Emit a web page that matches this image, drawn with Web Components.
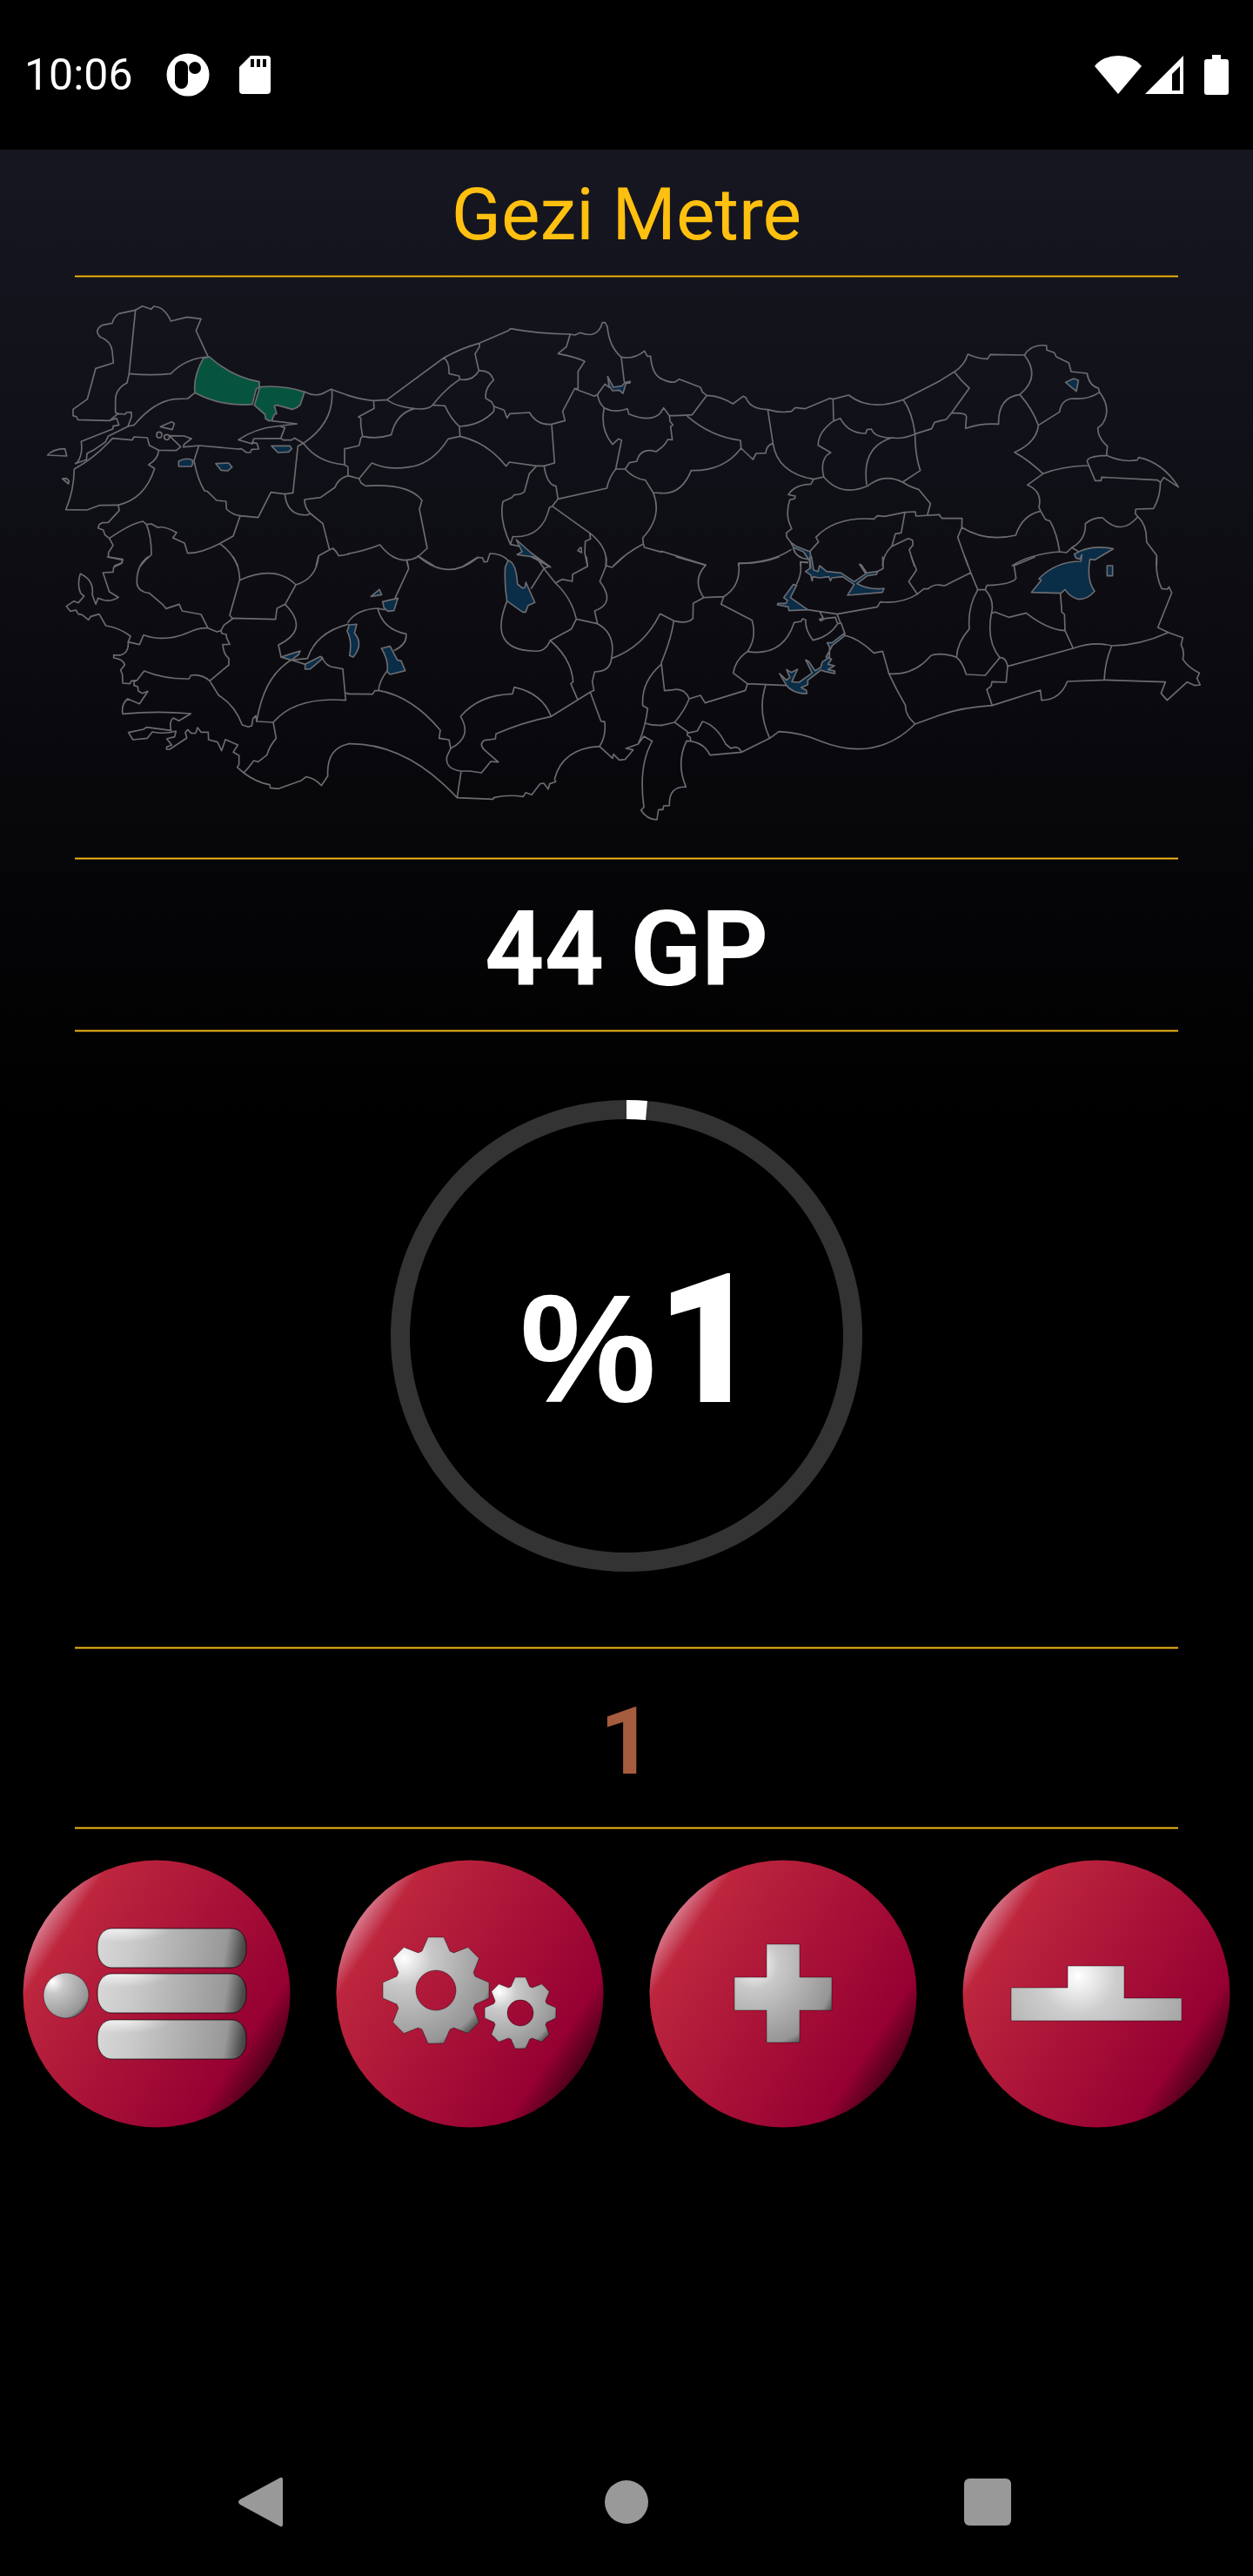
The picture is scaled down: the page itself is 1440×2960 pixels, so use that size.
<!DOCTYPE html>
<html lang="tr">
<head>
<meta charset="utf-8">
<meta name="viewport" content="width=device-width, initial-scale=1">
<title>Gezi Metre</title>
<style>
body{margin:0;background:#000;font-family:Roboto,sans-serif;color:#fff}
</style>
</head>
<body>
<gezi-app></gezi-app>
<script>
const define = (name, html) => {
  const tpl = document.createElement('template');
  tpl.innerHTML = html;
  customElements.define(name, class extends HTMLElement {
    constructor() {
      super();
      this.attachShadow({mode: 'open'}).append(tpl.content.cloneNode(true));
    }
  });
};

// Eight-toothed gear outline with a round hole; s scales the 61-unit radius.
const gear = (cx, cy, s, hole) => {
  const pts = [];
  for (let i = 0; i < 8; i++) {
    const a = i * Math.PI / 4, c = Math.cos(a), n = Math.sin(a);
    for (const [x, y] of [[-16, -45], [-9, -61], [9, -61], [16, -45]])
      pts.push((cx + s * (x * c - y * n)).toFixed(1) + ' ' + (cy + s * (x * n + y * c)).toFixed(1));
  }
  return `M${pts.join('L')}ZM${cx - hole} ${cy}a${hole} ${hole} 0 1 0 ${hole * 2} 0a${hole} ${hole} 0 1 0 ${-hole * 2} 0Z`;
};

define('status-bar', `
<style>
:host{display:flex;align-items:center;justify-content:space-between;height:172px;padding:0 28px;box-sizing:border-box;background:#000}
.left,.right{display:flex;align-items:center}
.left{gap:34px}
.right{gap:4px}
time{font-size:50px;line-height:60px;margin-right:4px}
svg{display:block;fill:#fff}
.bat{margin-left:20px}
</style>
<div class="left">
<time>10:06</time>
<svg width="50" height="50" viewBox="0 0 50 50"><circle cx="25" cy="25" r="24.500"/><rect x="10" y="9" width="15" height="32" rx="7.500" fill="#000"/><circle cx="33" cy="17" r="7" fill="#000"/></svg>
<svg width="36" height="46" viewBox="0 0 36 46"><path fill-rule="evenodd" d="M13 1H32a4 4 0 0 1 4 4V41a4 4 0 0 1-4 4H4a4 4 0 0 1-4-4V14ZM13 5V14H17V5ZM20 5V14H24V5ZM27 5V14H31V5Z"/></svg>
</div>
<div class="right">
<svg width="54" height="46" viewBox="0 0 54 46"><path d="M0 13Q10 1 27 1T54 13L27 45Z"/></svg>
<svg width="44" height="46" viewBox="0 0 44 46"><path fill-rule="evenodd" d="M44 1V45H0ZM40 13L31 22V41H40Z"/></svg>
<svg class="bat" width="28" height="46" viewBox="0 0 28 46"><path d="M9 0H19V5H25a3 3 0 0 1 3 3V43a3 3 0 0 1-3 3H3a3 3 0 0 1-3-3V8a3 3 0 0 1 3-3H9Z"/></svg>
</div>`);

define('gold-rule', `
<style>
:host{display:block;height:3px;margin:0 6%;background:linear-gradient(#7a5507 0 1px,#f0c020 1px 2px,#7a5507 2px)}
</style>`);

define('turkey-map', `
<style>
:host{display:block}
svg{display:block;width:100%;height:auto;fill:none;stroke:#6b6b70;stroke-width:5;stroke-linejoin:round;stroke-linecap:round}
.v{fill:#07543e}
.w{fill:#0a2d48}
</style>
<svg viewBox="0 319 1440 666" role="img" aria-label="Türkiye">
<g transform="translate(40 330) scale(.33333)">
<path d="M347 79L290 91Q272 103 267 124L232 131Q212 143 216 158L224 171Q262 184 267 220L271 261L210 280L181 386L132 421V443L144 447L149 457L258 460L282 452L290 475L270 479V488L160 532Q166 575 148 602L140 608L178 595L180 573L205 560L243 534L253 514L321 480L333 448V431L315 432L312 438L286 436L258 460"/>
<path d="M347 79L325 298L318 330Q278 350 278 390V432L286 436M347 79L371 65L401 76L410 66Q448 68 469 117L525 103L573 109L556 150L597 239M325 298Q400 306 469 298Q520 245 597 240M321 480L343 475Q410 395 480 386L527 384L552 364"/>
<path class="v" d="M581 245L602 240Q680 310 774 326V344L763 352L750 404Q640 412 552 364Q545 310 581 245Z"/>
<path class="v" d="M776 344Q850 336 930 361L915 406Q903 418 888 421L834 406L826 410L834 436L826 438L818 459L808 461L796 454L793 438L757 407Z"/>
<path d="M930 361Q970 382 1005 360L1021 352L1080 373M1024 352Q1035 465 926 538M818 461L904 471L830 480Q760 487 702 526L750 540L755 522L848 521L862 485L850 481M848 521L856 527H885L895 520L926 538"/>
<path d="M433 481L472 464L481 470L474 491ZM420 509a9 10 0 1 0 18 0a9 10 0 1 0-18 0M446 517a9 9 0 1 0 18 0a9 9 0 1 0-18 0M464 512L515 513L540 522L515 541L512 551L568 546L700 558L712 557L730 570H743L748 559L772 558L766 538L748 536M464 512L503 550L488 563L427 562L395 545L388 519L342 516L336 527L268 521Q205 590 136 627Q135 700 107 767L180 768L222 752L288 751"/>
<path d="M427 562Q425 593 392 612L413 625Q380 730 288 751L291 770L253 811L232 812L222 818L218 830L236 837L242 854L257 866L270 890L254 915V930L303 938L300 950L275 960M44 579Q62 558 104 557L110 582ZM95 660L109 659L118 668L116 678Z"/>
<path class="w" d="M496 600Q520 586 543 596L545 608L540 618H496ZM624 608L668 606L680 620L666 633L642 631ZM816 547H880L886 557L875 568L838 570Z"/>
<path d="M565 548L549 598Q560 660 585 702L595 704L627 735L659 738L661 765Q680 784 708 788L770 794L814 707L862 713L890 709L907 548L926 538Q975 605 1068 612L1080 620M1068 612V557L1080 555M708 788L684 858L637 884Q570 918 527 917L516 882L476 864L489 846Q440 820 425 829L402 816L385 818L373 807Q330 815 257 866M385 818Q402 860 402 922Q380 940 365 960M637 884Q675 908 700 960M862 713Q870 790 940 785L950 780L993 815L1016 905L978 926L970 960M1080 650Q1045 660 1035 690L985 725L930 732Q930 760 950 780M1016 905L1028 900Q1040 910 1048 926L1080 921"/>
</g>
<g transform="translate(400 330) scale(.33333)">
<path d="M0 373Q50 388 88 391L134 388L331 243Q390 210 453 193L554 149L560 143Q650 160 766 162L782 165L800 157Q860 180 877 122H886L894 136Q900 205 942 241Q985 250 1022 220L1032 238H1043Q1048 300 1080 316M88 391L90 418L36 447L44 452V475L50 514L44 520L38 546L0 555M50 514Q100 525 149 509Q165 435 230 418M134 388Q170 415 250 420Q280 420 292 406L334 409Q355 455 384 480L386 514L345 523Q290 610 210 620Q140 632 82 606L38 660L0 650V625M292 406Q335 350 385 318L383 306L348 298Q350 260 331 243M385 318Q430 325 451 288L438 230L453 205V193M451 288Q490 285 502 320Q470 350 475 383L495 395L503 411V427Q460 475 384 480"/>
<path d="M503 411L538 424L548 451L558 436L626 432Q650 475 700 473L748 460L740 428L781 350H793V290L816 256Q795 243 724 229L753 205L766 162M781 350L850 376L860 370L886 334L900 345M942 241L952 325M860 370Q865 400 883 416Q920 435 963 419L968 437Q1050 470 1080 430M883 416Q868 490 912 542L932 523L943 527L923 627H955L970 605L996 600Q1005 560 1045 563L1062 567L1080 553M386 514Q480 535 545 617L556 603L650 616H676L712 606L702 473M650 616L625 643L608 705Q600 715 572 716L565 725L534 739Q520 800 560 887L568 860Q670 865 694 760L704 755L724 730L717 686Q685 680 676 616M724 730L892 693Q900 655 923 627M955 627Q985 660 1025 665L1052 708L1080 710M1052 708Q1085 790 1016 864L1018 885Q960 915 915 960M1018 885L1022 897L1080 913M704 755L833 847Q900 900 888 960M833 847L836 868L818 876L816 915L825 960M800 898L792 908L805 915L804 898ZM560 887L590 893"/>
<path class="w" d="M895 308L915 345L945 340L955 328L973 325L972 330L958 332L948 366L935 355L912 357L900 340ZM580 870L630 915L698 965L640 930L583 922L600 912Z"/>
<path d="M38 660L45 675L60 685Q210 675 255 735L246 765L273 900L240 930Q170 965 110 888Q60 908 0 919M203 943L206 960M240 926L295 960M400 960L446 931L464 933L469 947L480 946L489 918Q530 918 552 942"/>
</g>
<g transform="translate(760 330) scale(.33333)">
<path d="M0 316Q30 330 47 327L62 317L135 345L142 362L157 373Q205 375 247 402L282 376L292 381Q305 420 367 422Q410 435 449 428L462 415L495 419L581 383L592 386L646 372Q720 430 834 388L960 323M157 373L106 440Q60 443 28 443L8 416L0 428M28 443L30 462L40 475L32 480L38 526L22 525Q12 545 0 553M90 445Q170 515 273 528L275 555Q215 635 103 632Q70 715 0 710M275 555L316 594L327 573L360 572Q362 545 385 538M367 422L385 538Q400 640 525 662L560 654M592 386L594 461L617 452Q645 505 705 504L709 491L724 489Q735 520 795 519Q830 525 875 506L932 488L942 466L960 461M594 461Q540 500 541 545L584 570Q545 590 560 654Q620 725 712 685Q770 640 832 672M795 519Q690 550 708 680M834 388Q865 430 875 506Q875 580 893 632L832 672Q860 690 887 697L928 746L918 783"/>
<path d="M525 662L516 679Q460 680 438 715L462 720L460 729L443 733Q425 790 450 832L431 847L433 862L447 880M447 905Q380 950 266 952V960M0 910L153 958M513 910L542 878L533 862Q600 790 733 799L745 788L770 790L840 776L876 774L878 789L960 784M840 776L827 847L807 850L795 893Q765 920 763 960M795 893L852 866L866 872L868 888L855 905L872 960M480 960V947L505 950"/>
<path class="w" d="M447 880L465 893L513 912L524 975H512V945L490 912L455 897Z"/>
<path d="M455 900Q465 935 508 938"/>
</g>
<g transform="translate(1080 330) scale(.33333)">
<path d="M0 323L50 292Q85 270 97 231Q135 248 165 247L174 232L292 234Q315 195 368 201L369 217L395 226L402 240L445 261L453 291L508 297Q515 340 547 348L551 362Q595 420 560 473L545 485Q545 520 578 548L575 580Q630 605 681 596L686 587Q770 605 823 689L772 656L761 673L751 665L558 655L556 667H536L508 600Q510 582 575 580M50 292Q75 325 102 348L40 434L22 456L0 461M40 434Q90 432 92 445L89 487Q140 468 203 472Q200 380 276 370Q350 310 292 234M276 370Q320 420 340 476Q335 535 258 569Q310 598 356 643Q420 617 512 615M340 476L413 430Q420 385 460 384Q515 388 551 362M356 643L302 682Q355 705 342 758L348 772L364 800L380 806Q405 850 413 912M761 673Q760 725 737 763L676 765L674 780L683 791Q715 820 713 878L748 925V960M683 791Q625 860 562 795Q530 792 502 815Q505 870 455 898L437 915L413 912Q310 920 250 960M0 788L8 797H77L76 828L62 862L97 960M76 828Q160 880 262 855Q285 785 348 772M455 898L480 912"/>
<path class="w" d="M434 328L462 315L478 321L471 359ZM464 920Q520 885 598 902L535 940L518 938Q505 1010 534 1048Q510 1076 480 1076Q450 1070 432 1042L418 1055L316 1052L350 1010L342 1005Q400 945 487 945L490 922L484 937L470 934Z"/>
</g>
<g transform="translate(40 640) scale(.33333)">
<path d="M250 0L303 10L300 22L272 35L270 52L235 54L257 120L288 139Q255 160 218 142L210 163L198 130Q205 80 157 58Q145 95 158 125L170 135L150 158L135 152L109 170L122 187L142 183L150 197L163 199L185 217L193 205L222 197L245 237Q290 243 330 273L322 293L361 302L375 269Q450 295 530 260Q565 243 597 245L573 198L508 186L498 163L452 178L440 163L395 125Q355 120 352 90Q350 30 390 0M597 245L628 258L642 254L652 235L682 213L672 200L706 80Q708 40 684 0M706 80Q830 25 900 96Q970 75 978 0M900 96L863 163L835 177L830 215L682 211M863 163Q950 250 840 303L849 345L885 355L940 350Q970 260 1080 232M885 355Q790 410 765 567L822 570Q900 480 1072 494L1062 386L1020 378Q1000 370 990 345M885 355L932 370"/>
<path class="w" d="M849 345L880 335L915 324L910 336L885 355ZM932 370L985 343L992 350L950 386L932 387Z"/>
<path d="M642 254L645 264L660 267L662 280L672 301L648 302Q650 335 669 350V372L603 427Q575 402 538 408L532 420Q450 422 377 393L352 425L332 428L328 437L303 435L302 405L296 390L310 372Q305 352 272 348V338Q325 345 322 293M352 425L342 430V443L355 447L357 462L370 470L390 463L361 506L320 489Q297 508 303 541Q420 530 538 540L497 565L477 555Q462 570 470 598L385 587L375 594L323 605L338 630L388 625L405 603Q450 612 487 600L482 620L455 627L472 648L455 655L454 663H465L524 624L519 605L527 595L540 608L555 607L561 588L573 604H598L599 630L630 638L644 668L657 629L700 648L684 673L704 684V715L698 725L720 744M603 427L634 477Q690 510 715 579L736 586L748 582L752 557L762 547L765 567M822 570L832 625Q810 650 800 683L770 706L755 702L735 728L720 744Q765 778 810 785L812 796L840 799L920 770L935 758Q965 762 988 788L1010 755Q1005 660 1080 645M1072 470H1080"/>
</g>
<g transform="translate(400 640) scale(.33333)">
<path d="M203 12L209 40L163 140M245 0Q345 85 446 3M102 177L125 182M0 225Q30 180 102 177Q120 250 200 265Q205 300 160 322M137 390Q108 425 105 460Q220 480 318 597L314 625L348 630L354 660M0 472L85 473L92 461L105 460M548 152Q480 320 640 324Q680 330 697 288L770 248L787 214Q770 140 715 90L675 40L632 108M675 40L695 32L632 0M675 38L655 10M715 90L738 77L773 84L774 60L826 32L822 0M787 214L860 230L850 186Q925 160 868 84L890 30V0M890 30L910 36L950 0"/>
<path class="w" d="M79 136L108 112L116 130ZM119 154L172 142L158 185L137 187L124 175ZM542 35L552 12Q580 20 584 93L602 108L610 105L613 87L644 157L621 167L612 190H602L548 152Q538 90 542 35ZM4 234L30 232L22 262Q55 300 18 345L5 340Q15 290 -3 256ZM115 315L145 308L170 355L183 358L197 392L145 405L135 395Q140 355 115 315Z"/>
<path d="M860 230Q925 265 908 350Q905 395 850 396L842 430L848 460L835 466L700 550Q600 570 510 610L508 627L470 632Q450 645 470 665L518 707L492 705L460 744L420 738H390Q330 730 342 685L354 660Q430 620 388 550Q450 475 567 472L573 449Q670 470 700 550M697 288Q770 350 776 430L768 437L791 490M908 350Q1020 310 1075 197H1080M835 466L872 566L885 568Q890 620 867 653Q740 660 712 765L716 775L695 782L690 800L675 780L662 782L633 820L613 812L604 826Q550 818 502 830L500 835L376 830Q200 640 0 644M376 830L390 738M867 653L912 694L915 680L935 700L955 698L983 665L958 660L1000 645Q1025 590 1033 522L1016 512Q1010 430 1080 370M1000 645L1020 618L1049 635Q1000 720 1020 862L1010 873Q1030 905 1065 906L1070 872L1080 870M1025 573Q1050 582 1080 580"/>
</g>
<g transform="translate(760 640) scale(.33333)">
<path d="M52 0L153 28Q105 80 146 140L215 137Q275 100 267 22Q340 25 405 0M0 198L43 220Q90 232 109 212L110 160L146 140M43 220Q35 280 0 365L11 461L40 458Q80 450 96 489L135 477L151 503L290 460L297 437L248 400Q255 355 297 326Q330 280 313 218L206 163L215 137M96 489Q80 530 46 570L0 581M46 570L90 602V615L100 622L101 634M90 607L124 600L142 567Q190 580 222 645L240 660Q265 648 277 673L168 683Q145 635 87 634Q50 710 85 793Q25 790 28 857L8 858L6 870L0 872M277 673L374 625L405 602Q480 605 550 635Q740 710 875 576L960 545M374 625Q330 530 360 442M297 437L430 443M297 326Q420 345 458 226L482 222L487 213L498 217Q495 250 523 287Q580 275 608 230L620 228L632 262M608 230L600 208L565 212L550 220L545 215L558 210L547 190M618 228L606 197L745 172L755 155Q830 162 883 128L905 110H920Q935 95 960 96M632 270Q680 280 733 331L763 325L785 403L812 458L842 512Q840 545 875 576M785 403Q870 408 925 345Q930 335 960 335M505 182L606 197M480 17L505 18M480 17Q485 60 467 92M763 0L765 40L742 52M862 0L880 45L853 85L883 128"/>
<path class="w" d="M408 402L432 425L443 415L432 388L448 398L470 387L450 430L475 432L520 400L498 355L508 360L530 392L550 380L555 362L580 345V310L572 296L590 295L632 262V272L590 305L568 345L587 352L575 370L597 375L575 388L598 393V402L565 395L550 390L505 425V440L482 450L500 460L502 471Q450 470 430 440ZM512 0H518L522 25L525 45L540 50L546 30L570 50L620 55L665 85L705 58L683 25L690 28L708 55L745 50L742 60L710 65L675 92Q720 115 768 108L762 122L642 132L665 95L625 68L588 72L583 82L578 68L545 72L523 68L520 82L515 62L497 50L515 38ZM455 95L467 97L445 140L505 182L440 185L438 172L400 165L402 160H430L435 150L422 140Z"/>
</g>
<g transform="translate(1080 640) scale(.33333)">
<path d="M87 0L107 54L17 99L0 97M107 54L131 113H157Q190 150 178 195Q160 290 207 347L157 408L91 405Q78 360 58 346Q60 295 102 248Q95 175 131 113M58 346Q30 335 0 335M157 113L162 98Q250 95 263 73L256 30L328 0M178 195L190 190L238 208L298 193Q370 250 432 254L430 198L421 190L416 125M432 254L460 315L234 377Q228 345 207 347M234 377L229 432L180 430L177 445L162 457L181 512Q80 518 0 545M181 512L347 459L351 494Q415 493 440 429L567 424L778 431L763 470L784 494L853 431L880 443L898 441L887 418L895 400Q855 380 838 352Q845 325 832 303L838 278L788 260Q690 305 593 306Q530 290 460 315M593 306Q570 360 567 424M788 260L752 243L800 123L790 103L785 111L765 109Q742 60 748 0"/>
<path class="w" d="M577 30H596V65H577Z"/>
</g>
</svg>`);

define('progress-ring', `
<style>
:host{display:grid;place-items:center;width:542px;aspect-ratio:1}
svg,.value{grid-area:1/1}
svg{display:block;width:100%}
.value{display:flex;align-items:baseline;font-family:"Liberation Sans",sans-serif;font-weight:700;font-size:176px;line-height:216px;padding:20px 0 0 32px}
::slotted(b){font-family:Roboto,sans-serif;font-size:208px;line-height:216px}
</style>
<svg viewBox="0 0 542 542" fill="none" stroke-width="22" aria-hidden="true"><circle cx="271" cy="271" r="260" stroke="#333"/><path d="M271 11A260 260 0 0 1 294 12" stroke="#fff"/></svg>
<div class="value"><slot></slot></div>`);

define('round-button', `
<style>
:host{display:grid;place-items:center;flex:1}
button{appearance:none;display:block;width:308px;height:308px;padding:0;border:0;border-radius:50%;background:none}
::slotted(svg){display:block;width:100%;height:100%}
</style>
<button type="button"><slot></slot></button>`);

define('system-nav', `
<style>
:host{display:flex;justify-content:space-between;align-items:center;padding:0 264px 44px}
button{appearance:none;display:block;padding:0;border:0;background:none}
svg{display:block;fill:#999}
</style>
<button type="button" aria-label="Geri"><svg width="82" height="82" viewBox="0 0 82 82"><path d="M58 13Q61 12 61 15V67Q61 70 58 69L12 44Q8 41 12 38Z"/></svg></button>
<button type="button" aria-label="Ana ekran"><svg width="82" height="82" viewBox="0 0 82 82"><circle cx="41" cy="41" r="25"/></svg></button>
<button type="button" aria-label="Son uygulamalar"><svg width="82" height="82" viewBox="0 0 82 82"><rect x="14" y="14" width="54" height="54" rx="6"/></svg></button>`);

const disc = id => `
<linearGradient id="d${id}" gradientUnits="userSpaceOnUse" x1="25" y1="70" x2="283" y2="238">
<stop offset="0" stop-color="#d7788b"/><stop offset=".09" stop-color="#bd263d"/><stop offset=".88" stop-color="#960032"/><stop offset="1" stop-color="#4c0019"/></linearGradient>
<linearGradient id="b${id}" x1="0" y1="0" x2="1" y2=".04">
<stop offset="0" stop-color="#d8d8d8"/><stop offset=".25" stop-color="#cacaca"/><stop offset=".88" stop-color="#989898"/><stop offset="1" stop-color="#484848"/></linearGradient>
<radialGradient id="h${id}" cx=".15" cy="0" r=".35"><stop offset="0" stop-color="#fff" stop-opacity=".7"/><stop offset="1" stop-color="#fff" stop-opacity="0"/></radialGradient>
<radialGradient id="g${id}" cx=".2" cy=".2" r=".95"><stop offset="0" stop-color="#fff"/><stop offset=".27" stop-color="#c9c9c9"/><stop offset=".88" stop-color="#959595"/><stop offset="1" stop-color="#444"/></radialGradient>
<radialGradient id="p${id}" gradientUnits="userSpaceOnUse" cx="133" cy="134" r="125"><stop offset="0" stop-color="#fff"/><stop offset=".35" stop-color="#cdcdcd"/><stop offset="1" stop-color="#a8a8a8"/></radialGradient>`;
const icon = (id, body) => `<svg viewBox="0 0 308 308" aria-hidden="true"><defs>${disc(id)}</defs><circle cx="154" cy="154" r="153.500" fill="url(#d${id})"/><g stroke="#000" stroke-opacity=".4">${body}</g></svg>`;
const bars = [79, 131, 184].map(y => ['b1', 'h1'].map(f => `<rect x="86" y="${y}" width="171" height="45" rx="16" ry="20" fill="url(#${f})"/>`).join('')).join('');

define('gezi-app', `
<style>
:host{display:flex;flex-direction:column;min-height:100vh;background:#000}
main{flex:1;display:flex;flex-direction:column;background:linear-gradient(#171722,#000 40%)}
h1,p{margin:0;text-align:center}
h1{padding:25px 0 19px;font-weight:400;font-size:84px;line-height:100px;color:#ffc00f}
.score{padding:33px 0 22px;font-weight:700;font-size:120px;line-height:140px}
.gauge{display:grid;justify-items:center;padding:78px 0 86px}
.rank{padding:36px 0 28px;font-weight:700;font-size:108px;line-height:140px;color:#a65c3e}
nav{display:flex;padding-top:35px}
system-nav{margin-top:auto}
</style>
<status-bar></status-bar>
<main>
<h1>Gezi Metre</h1>
<gold-rule></gold-rule>
<turkey-map></turkey-map>
<gold-rule></gold-rule>
<p class="score">44 GP</p>
<gold-rule></gold-rule>
<div class="gauge"><progress-ring>%<b>1</b></progress-ring></div>
<gold-rule></gold-rule>
<p class="rank">1</p>
<gold-rule></gold-rule>
<nav>
<round-button>${icon(1, bars + '<circle cx="50" cy="156" r="26" fill="url(#g1)"/>')}</round-button>
<round-button>${icon(2, `<path fill-rule="evenodd" fill="url(#g2)" d="${gear(115, 150, 1, 23)}"/><path fill-rule="evenodd" fill="url(#g2)" d="${gear(212, 176, 0.67, 15)}"/>`)}</round-button>
<round-button>${icon(3, '<path fill="url(#g3)" d="M135 97H173V135H210V173H173V210H135V173H98V135H135Z"/>')}</round-button>
<round-button>${icon(4, '<path fill="url(#p4)" d="M56 147H121V122H186V159H252V185H56Z"/>')}</round-button>
</nav>
<system-nav></system-nav>
</main>`);
</script>
</body>
</html>
